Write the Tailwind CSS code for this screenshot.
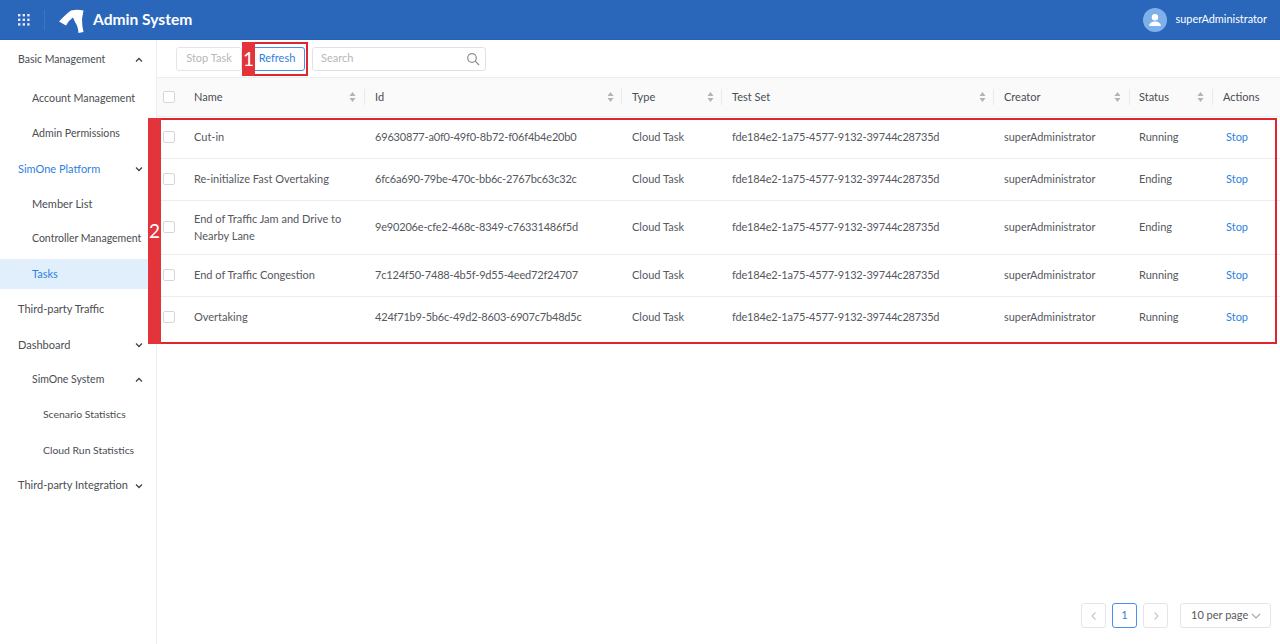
<!DOCTYPE html>
<html lang="en">
<head>
  <meta charset="UTF-8">
  <meta name="viewport" content="width=device-width, initial-scale=1.0">
  <title>Admin System - Tasks</title>
  <script src="https://cdn.jsdelivr.net/npm/@tailwindcss/browser@4"></script>
</head>
<body class="relative h-[644px] w-[1280px] overflow-hidden bg-white font-['Lato','Liberation_Sans',sans-serif] text-[11px] text-[#55585e]">
  <!-- header -->
  <header class="flex h-10 items-center bg-[#2a67bb] border-b border-[#2560b2] text-white">
    <svg class="ml-[17px] h-3.5 w-3.5" viewBox="0 0 14 14" fill="#e4ecf8">
      <rect x="1" y="1" width="2.4" height="2.4"/><rect x="5.6" y="1" width="2.4" height="2.4"/><rect x="10.2" y="1" width="2.4" height="2.4"/>
      <rect x="1" y="5.6" width="2.4" height="2.4"/><rect x="5.6" y="5.6" width="2.4" height="2.4"/><rect x="10.2" y="5.6" width="2.4" height="2.4"/>
      <rect x="1" y="10.2" width="2.4" height="2.4"/><rect x="5.6" y="10.2" width="2.4" height="2.4"/><rect x="10.2" y="10.2" width="2.4" height="2.4"/>
    </svg>
    <div class="ml-[13px] h-5 w-px bg-white/10"></div>
    <svg class="ml-[13px] h-[26px] w-[26px]" viewBox="0 0 26 26" fill="#fff">
      <path d="M1 14.500Q8 7 13 3.500Q19 2 25.500 3.500L24 12Q24 19 25.500 25L20.500 26Q20 19 17 15L15 10.500Q11 13 8 18.500Z"/>
    </svg>
    <span class="ml-[9px] text-[15.6px] font-bold">Admin System</span>
    <div class="ml-auto flex items-center gap-[9px] pr-[13px]">
      <span class="flex h-6 w-6 items-center justify-center rounded-full bg-[#7fb0ea]">
        <svg class="h-4 w-4" viewBox="0 0 16 16" fill="#fff"><circle cx="8" cy="5.2" r="3.2"/><path d="M2 14c.4-3 2.6-4.5 6-4.5s5.600 1.500 6 4.500z"/></svg>
      </span>
      <span class="text-[10.9px]">superAdministrator</span>
    </div>
  </header>

  <div class="flex h-[604px]">
    <!-- sidebar -->
    <nav class="w-[157px] shrink-0 border-r border-[#ebedf0] pt-[2px] text-[#4a4d52]">
      <a class="flex h-[35.2px] items-center justify-between pl-[18px] pr-[13px] text-[10.5px]">Basic Management
        <svg class="h-2 w-2" viewBox="0 0 8 8" fill="none" stroke="#444" stroke-width="1.300"><path d="M1 5.500 4 2.500 7 5.500"/></svg></a>
      <a class="mt-[3.700px] flex h-[35.2px] items-center pl-8 text-[10.7px]">Account Management</a>
      <a class="flex h-[35.2px] items-center pl-8 text-[10.6px]">Admin Permissions</a>
      <a class="flex h-[35.2px] items-center justify-between pl-[18px] pr-[13px] text-[#2f7fe0]">SimOne Platform
        <svg class="h-2 w-2" viewBox="0 0 8 8" fill="none" stroke="#444" stroke-width="1.300"><path d="M1 2.500 4 5.500 7 2.500"/></svg></a>
      <a class="flex h-[35.2px] items-center pl-8">Member List</a>
      <a class="flex h-[35.2px] items-center pl-8 text-[10.5px]">Controller Management</a>
      <a class="my-[2.600px] flex h-[30px] items-center bg-[#e1effd] pl-8 text-[#2f7fe0]">Tasks</a>
      <a class="flex h-[35.2px] items-center pl-[18px]">Third-party Traffic</a>
      <a class="flex h-[35.2px] items-center justify-between pl-[18px] pr-[13px]">Dashboard
        <svg class="h-2 w-2" viewBox="0 0 8 8" fill="none" stroke="#444" stroke-width="1.300"><path d="M1 2.500 4 5.500 7 2.500"/></svg></a>
      <a class="flex h-[35.2px] items-center justify-between pl-8 pr-[13px] text-[10.5px]">SimOne System
        <svg class="h-2 w-2" viewBox="0 0 8 8" fill="none" stroke="#444" stroke-width="1.300"><path d="M1 5.500 4 2.500 7 5.500"/></svg></a>
      <a class="flex h-[35.2px] items-center pl-[43px] text-[10.4px]">Scenario Statistics</a>
      <a class="flex h-[35.2px] items-center pl-[43px] text-[10.4px]">Cloud Run Statistics</a>
      <a class="flex h-[35.2px] items-center justify-between pl-[18px] pr-[13px]">Third-party Integration
        <svg class="h-2 w-2" viewBox="0 0 8 8" fill="none" stroke="#444" stroke-width="1.300"><path d="M1 2.500 4 5.500 7 2.500"/></svg></a>
    </nav>

    <!-- main -->
    <main class="relative min-w-0 flex-1">
      <div class="flex h-[38px] items-center gap-[7px] border-b border-[#ebedf0] pl-[19px]">
        <button class="h-6 w-[66px] rounded-[3px] border border-[#e3e5e8] text-[#b4b7bc]">Stop Task</button>
        <button class="h-6 w-[56px] rounded-[3px] border border-[#4a90e8] text-[#2f7fe0]">Refresh</button>
        <div class="flex h-6 w-[174px] items-center justify-between rounded-[3px] border border-[#e0e2e5] pl-2 pr-[5px] text-[#b4b7bc]">
          <span>Search</span>
          <svg class="h-3.5 w-3.5" viewBox="0 0 14 14" fill="none" stroke="#8a8d92" stroke-width="1.200"><circle cx="6" cy="6" r="4.300"/><path d="M9.200 9.200 13 13"/></svg>
        </div>
      </div>

      <table class="w-[1123px] table-fixed border-collapse text-left">
        <colgroup>
          <col class="w-[27px]"><col class="w-[181px]"><col class="w-[257px]"><col class="w-[100px]"><col class="w-[272px]"><col class="w-[136px]"><col class="w-[83px]"><col class="w-[67px]">
        </colgroup>
        <thead class="bg-[#fafafb] text-[#4a4d52]">
          <tr class="h-[38px] border-b border-[#ebedf0]">
            <th class="pl-[6px] font-normal"><span class="block h-3 w-3 rounded-[2px] border border-[#d5d7da] bg-white"></span></th>
            <th class="pt-px font-normal"><div class="flex h-4 items-center justify-between border-r border-[#e8eaed] pl-[10px] pr-[8px]">Name
              <svg class="h-[10px] w-[7px]" viewBox="0 0 7 10" fill="#b0b3b8"><path d="M3.500 0 6.500 4H.500zM3.500 10 .500 6h6z"/></svg></div></th>
            <th class="pt-px font-normal"><div class="flex h-4 items-center justify-between border-r border-[#e8eaed] pl-[10px] pr-[7px]">Id
              <svg class="h-[10px] w-[7px]" viewBox="0 0 7 10" fill="#b0b3b8"><path d="M3.500 0 6.500 4H.500zM3.500 10 .500 6h6z"/></svg></div></th>
            <th class="pt-px font-normal"><div class="flex h-4 items-center justify-between border-r border-[#e8eaed] pl-[10px] pr-[7px]">Type
              <svg class="h-[10px] w-[7px]" viewBox="0 0 7 10" fill="#b0b3b8"><path d="M3.500 0 6.500 4H.500zM3.500 10 .500 6h6z"/></svg></div></th>
            <th class="pt-px font-normal"><div class="flex h-4 items-center justify-between border-r border-[#e8eaed] pl-[10px] pr-[7px]">Test Set
              <svg class="h-[10px] w-[7px]" viewBox="0 0 7 10" fill="#b0b3b8"><path d="M3.500 0 6.500 4H.500zM3.500 10 .500 6h6z"/></svg></div></th>
            <th class="pt-px font-normal"><div class="flex h-4 items-center justify-between border-r border-[#e8eaed] pl-[10px] pr-[8px]">Creator
              <svg class="h-[10px] w-[7px]" viewBox="0 0 7 10" fill="#b0b3b8"><path d="M3.500 0 6.500 4H.500zM3.500 10 .500 6h6z"/></svg></div></th>
            <th class="pt-px font-normal"><div class="flex h-4 items-center justify-between border-r border-[#e8eaed] pl-[9px] pr-[8px]">Status
              <svg class="h-[10px] w-[7px]" viewBox="0 0 7 10" fill="#b0b3b8"><path d="M3.500 0 6.500 4H.500zM3.500 10 .500 6h6z"/></svg></div></th>
            <th class="pl-[10px] pt-px font-normal">Actions</th>
          </tr>
        </thead>
        <tbody>
          <tr class="h-[42px] border-b border-[#ebedf0]">
            <td class="pl-[6px]"><span class="block h-3 w-3 rounded-[2px] border border-[#d5d7da]"></span></td>
            <td class="pl-[10px]">Cut-in</td><td class="pl-[10px] tracking-[-0.19px]">69630877-a0f0-49f0-8b72-f06f4b4e20b0</td><td class="pl-[10px]">Cloud Task</td>
            <td class="pl-[10px] tracking-[-0.19px]">fde184e2-1a75-4577-9132-39744c28735d</td><td class="pl-[10px] text-[10.9px]">superAdministrator</td><td class="pl-[9px]">Running</td><td class="pl-[13px] text-[#2f7fe0]">Stop</td>
          </tr>
          <tr class="h-[42px] border-b border-[#ebedf0]">
            <td class="pl-[6px]"><span class="block h-3 w-3 rounded-[2px] border border-[#d5d7da]"></span></td>
            <td class="pl-[10px]">Re-initialize Fast Overtaking</td><td class="pl-[10px] tracking-[-0.19px]">6fc6a690-79be-470c-bb6c-2767bc63c32c</td><td class="pl-[10px]">Cloud Task</td>
            <td class="pl-[10px] tracking-[-0.19px]">fde184e2-1a75-4577-9132-39744c28735d</td><td class="pl-[10px] text-[10.9px]">superAdministrator</td><td class="pl-[9px]">Ending</td><td class="pl-[13px] text-[#2f7fe0]">Stop</td>
          </tr>
          <tr class="h-[54px] border-b border-[#ebedf0]">
            <td class="pl-[6px]"><span class="block h-3 w-3 rounded-[2px] border border-[#d5d7da]"></span></td>
            <td class="pl-[10px] leading-[17px]">End of Traffic Jam and Drive to<br>Nearby Lane</td><td class="pl-[10px] tracking-[-0.19px]">9e90206e-cfe2-468c-8349-c76331486f5d</td><td class="pl-[10px]">Cloud Task</td>
            <td class="pl-[10px] tracking-[-0.19px]">fde184e2-1a75-4577-9132-39744c28735d</td><td class="pl-[10px] text-[10.9px]">superAdministrator</td><td class="pl-[9px]">Ending</td><td class="pl-[13px] text-[#2f7fe0]">Stop</td>
          </tr>
          <tr class="h-[42px] border-b border-[#ebedf0]">
            <td class="pl-[6px]"><span class="block h-3 w-3 rounded-[2px] border border-[#d5d7da]"></span></td>
            <td class="pl-[10px]">End of Traffic Congestion</td><td class="pl-[10px] tracking-[-0.19px]">7c124f50-7488-4b5f-9d55-4eed72f24707</td><td class="pl-[10px]">Cloud Task</td>
            <td class="pl-[10px] tracking-[-0.19px]">fde184e2-1a75-4577-9132-39744c28735d</td><td class="pl-[10px] text-[10.9px]">superAdministrator</td><td class="pl-[9px]">Running</td><td class="pl-[13px] text-[#2f7fe0]">Stop</td>
          </tr>
          <tr class="h-[42px]">
            <td class="pl-[6px]"><span class="block h-3 w-3 rounded-[2px] border border-[#d5d7da]"></span></td>
            <td class="pl-[10px]">Overtaking</td><td class="pl-[10px] tracking-[-0.19px]">424f71b9-5b6c-49d2-8603-6907c7b48d5c</td><td class="pl-[10px]">Cloud Task</td>
            <td class="pl-[10px] tracking-[-0.19px]">fde184e2-1a75-4577-9132-39744c28735d</td><td class="pl-[10px] text-[10.9px]">superAdministrator</td><td class="pl-[9px]">Running</td><td class="pl-[13px] text-[#2f7fe0]">Stop</td>
          </tr>
        </tbody>
      </table>

      <!-- pagination -->
      <div class="absolute bottom-[16px] right-[9px] flex items-center gap-[6px] whitespace-nowrap text-[#55585e]">
        <span class="flex h-[25px] w-[25px] items-center justify-center rounded-[3px] border border-[#e3e5e8]">
          <svg class="h-2.5 w-2.5" viewBox="0 0 10 10" fill="none" stroke="#c4c6ca" stroke-width="1.200"><path d="M6.500 1.500 3 5l3.500 3.500"/></svg></span>
        <span class="flex h-[25px] w-[25px] items-center justify-center rounded-[3px] border border-[#4a90e8] text-[#2f7fe0]">1</span>
        <span class="flex h-[25px] w-[25px] items-center justify-center rounded-[3px] border border-[#e3e5e8]">
          <svg class="h-2.5 w-2.5" viewBox="0 0 10 10" fill="none" stroke="#c4c6ca" stroke-width="1.200"><path d="M3.500 1.500 7 5 3.500 8.500"/></svg></span>
        <div class="ml-[6px] flex h-[25px] w-[91px] items-center justify-between rounded-[3px] border border-[#e3e5e8] pl-[10px] pr-[9px]">10 per page
          <svg class="h-2.5 w-2.5" viewBox="0 0 10 10" fill="none" stroke="#a5a8ad" stroke-width="1.100"><path d="M1 3 5 7 9 3"/></svg></div>
      </div>
    </main>
  </div>

  <!-- red annotations over the screenshot -->
  <div class="absolute left-[242px] top-[42px] h-[34px] w-[66px] border-2 border-[#e0262c]"></div>
  <div class="absolute left-[242px] top-[42px] flex h-[34px] w-[13px] items-center justify-center bg-[#e2343a] text-[19px] text-white">1</div>
  <div class="absolute left-[148px] top-[118px] h-[226px] w-[1129px] border-2 border-[#e0262c]"></div>
  <div class="absolute left-[148px] top-[118px] flex h-[226px] w-[13px] items-center justify-center bg-[#e2343a] text-[19px] text-white">2</div>
</body>
</html>
